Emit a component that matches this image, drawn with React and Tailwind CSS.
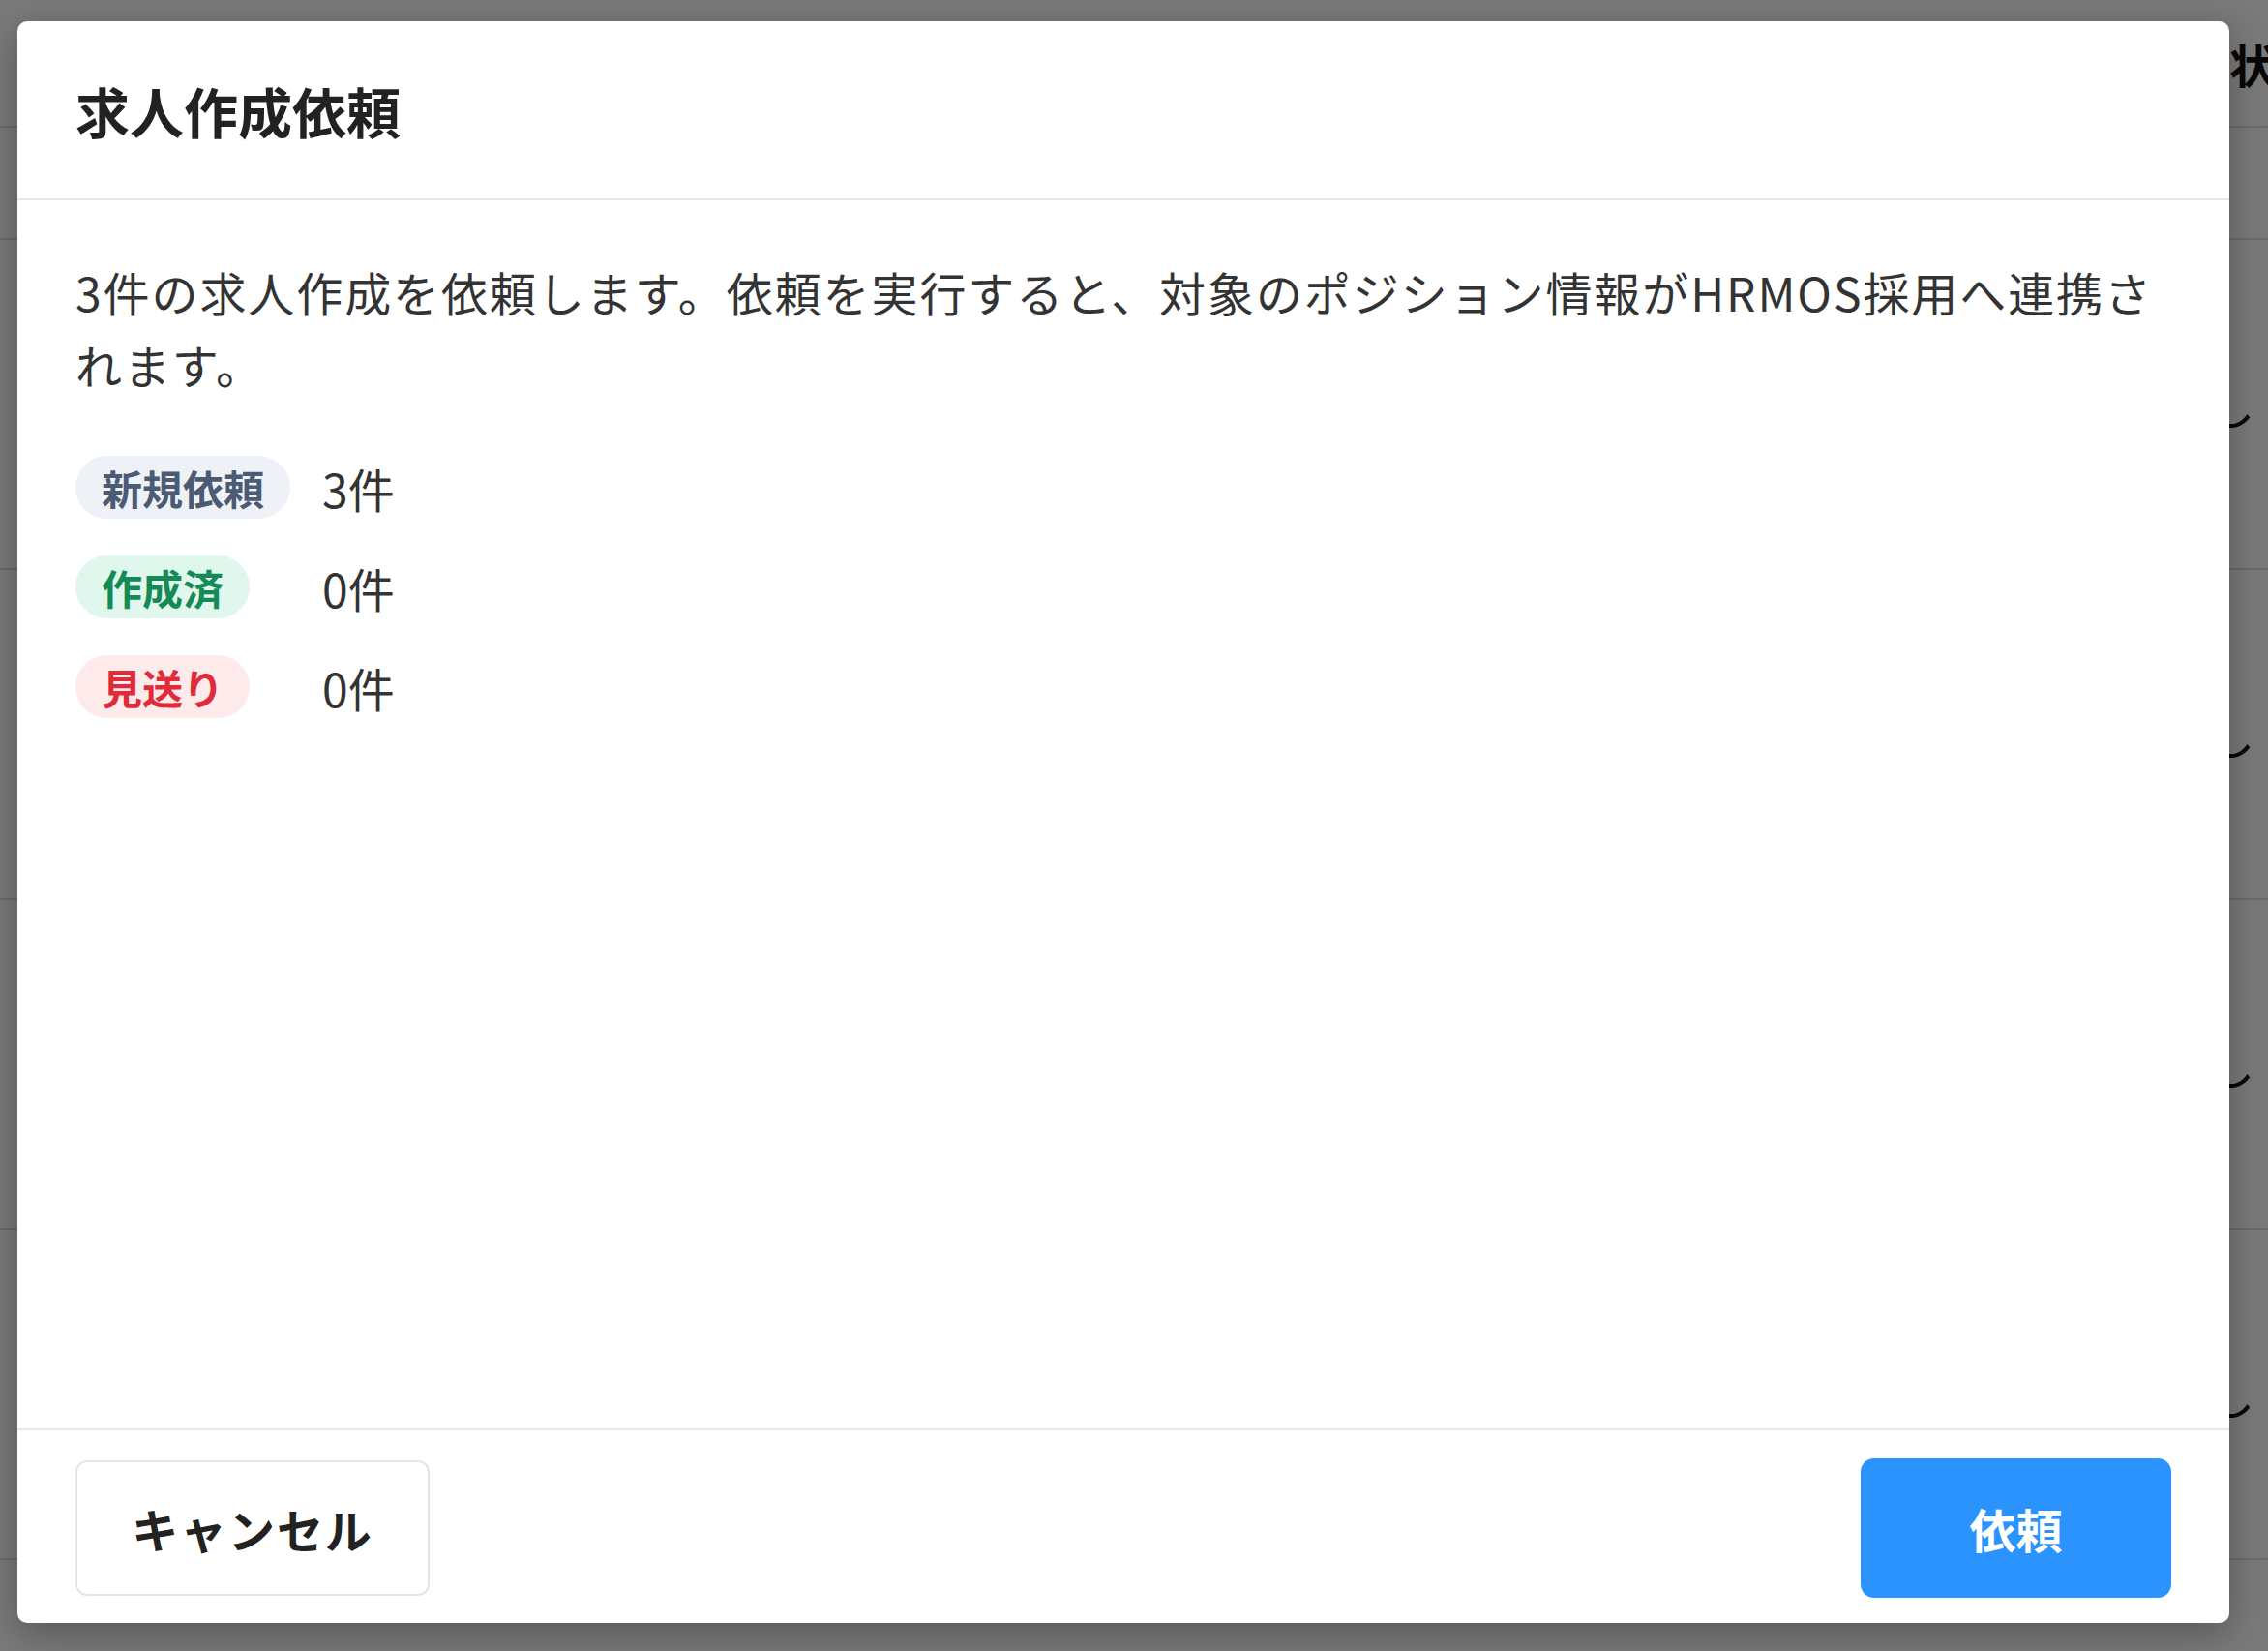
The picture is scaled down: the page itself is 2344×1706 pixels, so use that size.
import React from 'react';

// Status rows shown in the request dialog
const statuses = [
  { label: '新規依頼', count: 3, className: 'bg-[#eef1f5] text-[#4b5b73]' },
  { label: '作成済', count: 0, className: 'bg-[#dff7ec] text-[#168a56]' },
  { label: '見送り', count: 0, className: 'bg-[#fdebec] text-[#e02b3b]' },
];

/**
 * Background page (table) dimmed behind the dialog
 */
const BackgroundPage = () => (
  <div className="flex flex-col">
    <div className="flex h-[132px] items-center justify-end border-b-2 border-[#e0e0e0]">
      <span className="w-[40px] shrink-0 whitespace-nowrap text-[48px] font-bold text-[#111]">状況</span>
    </div>
    <div className="h-[116px] border-b-2 border-[#e0e0e0]" />
    {[0, 1, 2, 3].map((i) => (
      <div key={i} className="flex h-[341px] items-center justify-end border-b-2 border-[#e0e0e0]">
        <span className="w-[54px] -translate-x-[8px] text-[48px] text-[#111]">し</span>
      </div>
    ))}
  </div>
);

export default function App() {
  return (
    <div className="relative h-[1706px] w-[2344px] overflow-hidden bg-white font-['Noto_Sans_CJK_JP','Noto_Sans',sans-serif]">
      <BackgroundPage />

      {/* Overlay */}
      <div className="absolute inset-0 bg-black/[0.52]" />

      {/* Dialog */}
      <div className="absolute left-[18px] top-[22px] flex h-[1655px] w-[2286px] flex-col overflow-hidden rounded-[10px] bg-white shadow-[0_10px_40px_rgba(0,0,0,0.3)]">
        <div className="flex h-[185px] shrink-0 items-center border-b-2 border-[#e6e8eb] px-[60px]">
          <h2 className="text-[56px] font-bold leading-none text-[#222]">求人作成依頼</h2>
        </div>

        <div className="flex-1 px-[60px] pt-[57px]">
          <p className="text-[48px] leading-[75px] tracking-[0.04em] text-[#333]">
            3件の求人作成を依頼します。依頼を実行すると、対象のポジション情報がHRMOS採用へ連携されます。
          </p>

          <div className="mt-[57px] grid grid-cols-[auto_1fr] items-center gap-x-[33px] gap-y-[38px]">
            {statuses.map((s) => (
              <React.Fragment key={s.label}>
                <div className="flex">
                  <span className={`flex h-[65px] items-center rounded-full px-[27px] text-[42px] font-bold leading-none ${s.className}`}>
                    {s.label}
                  </span>
                </div>
                <span className="text-[48px] leading-none text-[#333]">{s.count}件</span>
              </React.Fragment>
            ))}
          </div>
        </div>

        <div className="flex h-[201px] shrink-0 items-center justify-between border-t-2 border-[#e6e8eb] px-[60px] pt-[2px]">
          <button className="h-[140px] w-[366px] rounded-[12px] border-2 border-[#e3e5e8] bg-white text-[48px] font-bold tracking-[0.04em] text-[#222]">
            キャンセル
          </button>
          <button className="h-[144px] w-[321px] rounded-[14px] bg-[#2b93fd] text-[48px] font-bold text-white">
            依頼
          </button>
        </div>
      </div>
    </div>
  );
}
